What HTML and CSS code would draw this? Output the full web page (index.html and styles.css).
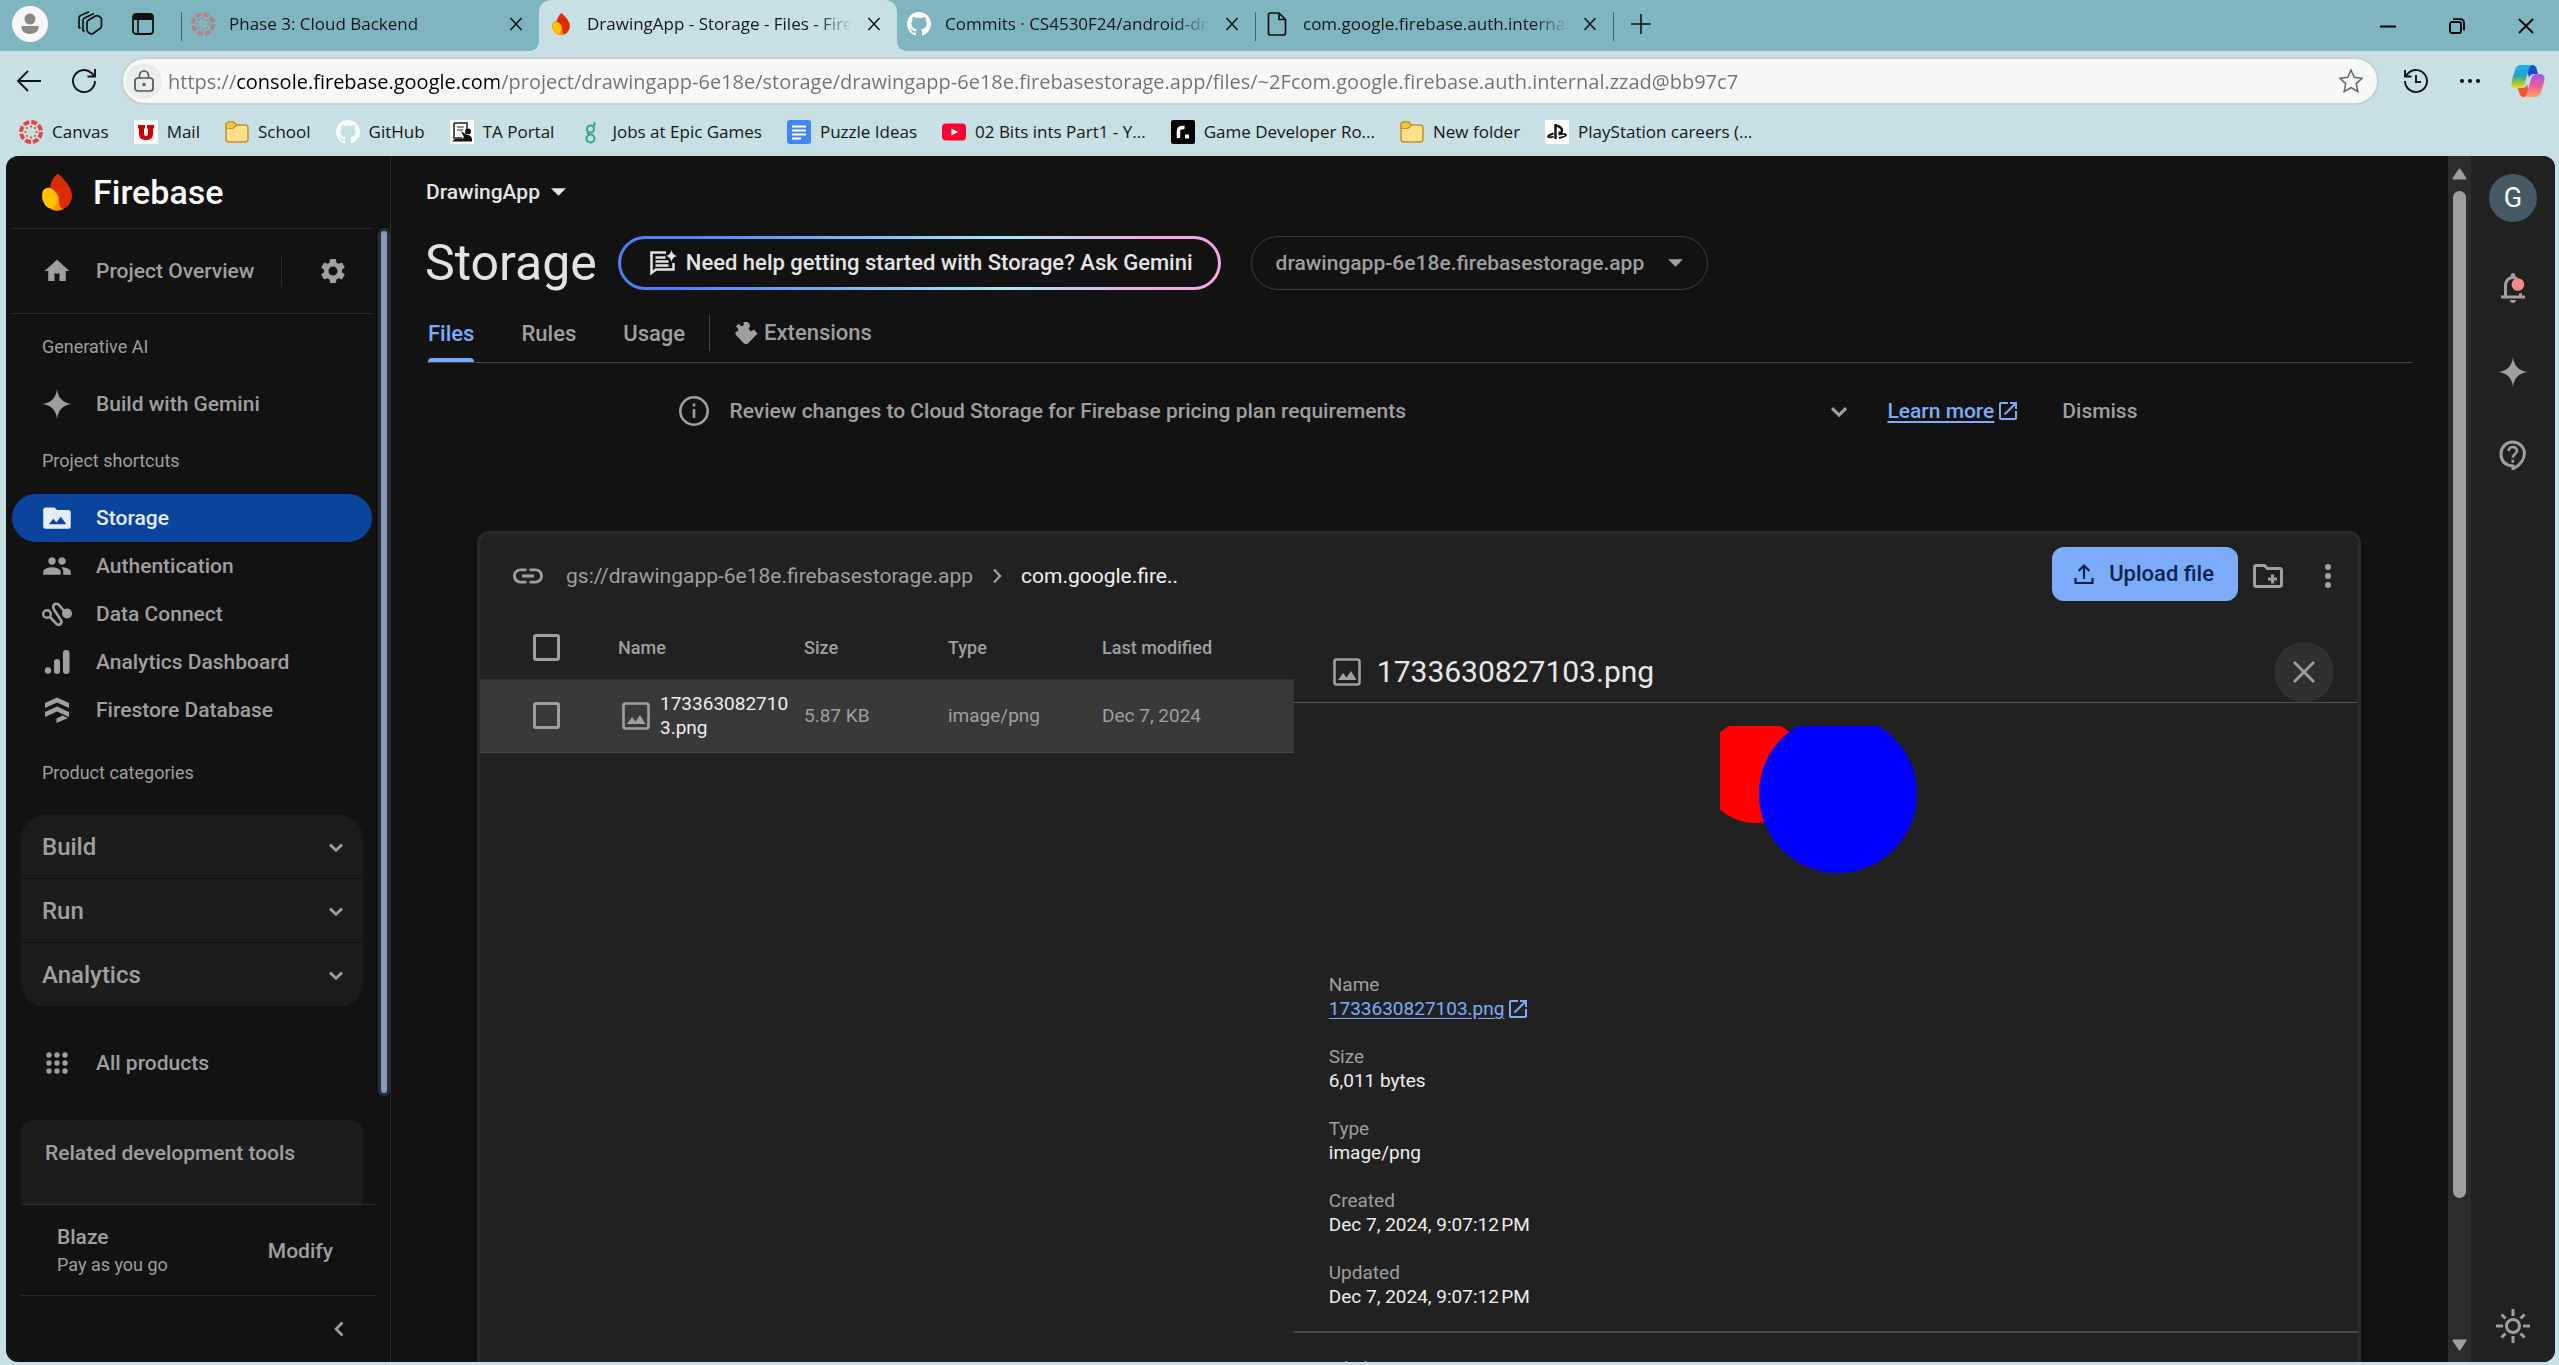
FILE: index.html
```html
<!DOCTYPE html>
<html lang="en">
<head>
<meta charset="utf-8">
<title>DrawingApp - Storage - Files - Firebase console</title>
<link rel="stylesheet" href="styles.css">
</head>
<body>
<svg class="sprite" aria-hidden="true">
  <symbol id="close" viewBox="0 0 24 24"><path d="M6.500 6 17.500 18M17.500 6 6.500 18" fill="none" stroke="currentColor" stroke-width="1.600"/></symbol>
  <symbol id="canvas" viewBox="0 0 24 24"><circle cx="12" cy="12" r="10" fill="none" stroke="currentColor" stroke-width="4" stroke-dasharray="5.850 2"/><g fill="currentColor"><circle cx="12" cy="6.500" r="1.100"/><circle cx="12" cy="17.500" r="1.100"/><circle cx="6.500" cy="12" r="1.100"/><circle cx="17.500" cy="12" r="1.100"/><circle cx="8" cy="8" r="1"/><circle cx="16" cy="8" r="1"/><circle cx="8" cy="16" r="1"/><circle cx="16" cy="16" r="1"/></g></symbol>
  <symbol id="github" viewBox="0 0 16 16"><path fill="#fff" d="M8 0C3.580 0 0 3.580 0 8c0 3.540 2.290 6.530 5.470 7.590.4.070.55-.17.55-.38 0-.19-.01-.82-.01-1.490-2.010.37-2.530-.49-2.690-.94-.09-.23-.48-.94-.82-1.130-.28-.15-.68-.52-.01-.53.63-.01 1.080.58 1.230.82.72 1.210 1.870.87 2.330.66.07-.52.28-.87.51-1.070-1.780-.2-3.640-.89-3.640-3.950 0-.87.31-1.590.82-2.150-.08-.2-.36-1.020.08-2.120 0 0 .67-.21 2.200.82.64-.18 1.320-.27 2-.27s1.360.09 2 .27c1.530-1.040 2.200-.82 2.200-.82.44 1.100.16 1.920.08 2.120.51.56.82 1.270.82 2.150 0 3.070-1.870 3.750-3.650 3.950.29.25.54.73.54 1.480 0 1.070-.01 1.930-.01 2.200 0 .21.15.46.55.38A8.010 8.010 0 0 0 16 8c0-4.420-3.580-8-8-8z"/></symbol>
  <symbol id="folder" viewBox="0 0 24 24"><path d="M1 5q0-3 3-3h4.500l3 3H20q3 0 3 3v11q0 3-3 3H4q-3 0-3-3z" fill="#ffe08a" stroke="#c0922c" stroke-width="1.500"/><path d="M1.500 8.500H8L11.500 5 8.500 2H4Q1 2 1 5z" fill="#f4c63d" stroke="#c0922c" stroke-width="1.200"/></symbol>
  <symbol id="flame" viewBox="0 0 30 37"><path d="M16 0C22 6 30 14 30 22a15 15 0 0 1-30 0C0 17 3 14 8 14 9 8 11 4 16 0z" fill="#dd2c00"/><path d="M1 17Q5 12.500 10 15.500 17 20 17 27q0 4-2.500 8Q8 37 4 32.500-1.500 26 1 17z" fill="#ffc400"/><path d="M8 14.500Q17 19 17 27t5 8.500Q15 38.500 9 36 15 32 15.500 26 15 19 8 14.500z" fill="#ff9100"/></symbol>
  <symbol id="chev-down" viewBox="0 0 24 24"><path d="M6 9.500 12 15.500 18 9.500" fill="none" stroke="currentColor" stroke-width="2.600"/></symbol>
  <symbol id="chev-left" viewBox="0 0 24 24"><path d="M15.500 5.500 9 12 15.500 18.500" fill="none" stroke="currentColor" stroke-width="2.600"/></symbol>
  <symbol id="chev-right" viewBox="0 0 24 24"><path d="M9 5.500 15 12 9 18.500" fill="none" stroke="currentColor" stroke-width="2.400"/></symbol>
  <symbol id="caret" viewBox="0 0 16 8"><path d="M0 0h16l-8 8z" fill="currentColor"/></symbol>
  <symbol id="spark" viewBox="0 0 30 30"><path d="M15 0C16 9 21 14 30 15 21 16 16 21 15 30 14 21 9 16 0 15 9 14 14 9 15 0z" fill="currentColor"/></symbol>
  <symbol id="open" viewBox="0 0 24 24"><path fill="currentColor" d="M19 19H5V5h7V3H5a2 2 0 0 0-2 2v14a2 2 0 0 0 2 2h14c1.100 0 2-.9 2-2v-7h-2v7zM14 3v2h3.590l-9.830 9.830 1.410 1.410L19 6.410V10h2V3h-7z"/></symbol>
  <symbol id="image" viewBox="0 0 28 28"><path fill="none" stroke="currentColor" stroke-width="2.600" d="M3.500 1.500h21q2 0 2 2v21q0 2-2 2h-21q-2 0-2-2v-21q0-2 2-2z"/><path fill="currentColor" d="M5 22l5-7 3.500 4.500L18 13l5.500 9z"/></symbol>
</svg>

<header class="browser">
  <div class="tabstrip">
    <div class="tools">
      <button class="plain" aria-label="Profile"><svg width="36" height="36" viewBox="0 0 36 36"><circle cx="18" cy="18" r="18" fill="#f7f7f7"/><circle cx="18" cy="13" r="5.500" fill="#8a8886"/><path d="M9.500 20h17q1 7-8.500 8-9.500-1-8.500-8z" fill="#8a8886"/></svg></button>
      <button class="plain" aria-label="Workspaces"><svg width="26" height="26" viewBox="0 0 26 26" fill="none" stroke="#111" stroke-width="1.700"><path d="M10 11.500q0-1.500 1.500-2.500l7-4q1.500-.8 3 0l1.500 1q1.500 1 1.500 2.500v6.500q0 1.500-1.500 2.500l-7 5q-1.500 1-3 0l-1.500-1q-1.500-1-1.500-2.500z"/><path d="M7.500 20.500 6 19.500V9.500q0-1.500 1.500-2.500L17 2.500M3.500 17.500 2 16.500V7q0-1.500 1.500-2.500L12 .8"/></svg></button>
      <button class="plain" aria-label="Tab actions"><svg width="24" height="24" viewBox="0 0 24 24"><rect x="2" y="2" width="20" height="20" rx="3" fill="none" stroke="#111" stroke-width="1.800"/><path d="M2 3h20v5H2z" fill="#111"/><path d="M7 8v14" stroke="#111" stroke-width="1.600"/></svg></button>
    </div>
    <div class="tab ruled"><svg class="fav faded" width="24" height="24"><use href="#canvas"/></svg><span class="tab-title">Phase 3: Cloud Backend</span><button class="plain" aria-label="Close tab"><svg width="24" height="24"><use href="#close"/></svg></button></div>
    <div class="tab active"><svg class="fav" width="20" height="22"><use href="#flame"/></svg><span class="tab-title">DrawingApp - Storage - Files - Firebase console</span><button class="plain" aria-label="Close tab"><svg width="24" height="24"><use href="#close"/></svg></button></div>
    <div class="tab"><svg class="fav" width="24" height="24"><use href="#github"/></svg><span class="tab-title">Commits · CS4530F24/android-drawing-app</span><button class="plain" aria-label="Close tab"><svg width="24" height="24"><use href="#close"/></svg></button></div>
    <div class="tab ruled"><svg class="fav" width="24" height="24" viewBox="0 0 24 24"><path d="M3.500 3q0-2 2-2H14l6.500 6.500V21q0 2-2 2h-13q-2 0-2-2zM14 1v6.500h6.500" fill="none" stroke="#111" stroke-width="1.700"/></svg><span class="tab-title">com.google.firebase.auth.internal.zzad</span><button class="plain" aria-label="Close tab"><svg width="24" height="24"><use href="#close"/></svg></button></div>
    <div class="newtab"><button class="plain" aria-label="New tab"><svg width="22" height="22" viewBox="0 0 22 22"><path d="M11 1v20M1 11h20" stroke="#111" stroke-width="1.600"/></svg></button></div>
    <div class="winctl">
      <button class="plain" aria-label="Minimize"><svg width="16" height="16" viewBox="0 0 16 16"><path d="M0 8.500h16" stroke="#000" stroke-width="2"/></svg></button>
      <button class="plain" aria-label="Restore"><svg width="16" height="16" viewBox="0 0 16 16" fill="none" stroke="#000" stroke-width="1.800"><rect x="1" y="4" width="11" height="11" rx="2"/><path d="M4 1.200h7q4 0 4 4v7"/></svg></button>
      <button class="plain" aria-label="Close"><svg width="16" height="16" viewBox="0 0 16 16"><path d="M1 1l14 14M15 1 1 15" stroke="#000" stroke-width="1.800"/></svg></button>
    </div>
  </div>

  <div class="toolbar">
    <button class="plain" aria-label="Back"><svg width="26" height="26" viewBox="0 0 26 26" fill="none" stroke="#111" stroke-width="1.900"><path d="M25 13H2M12 3 2 13l10 10"/></svg></button>
    <button class="plain reload" aria-label="Refresh"><svg width="26" height="26" viewBox="0 0 26 26" fill="none" stroke="#111" stroke-width="1.900"><path d="M24 13A11 11 0 1 1 20.500 5L23.500 8M24 1v7.500h-7.500"/></svg></button>
    <div class="address">
      <span class="lock"><svg width="20" height="22" viewBox="0 0 20 22" fill="none" stroke="#555" stroke-width="1.700"><rect x="1" y="8" width="18" height="13" rx="3"/><path d="M5.500 8V5.500a4.500 4.500 0 0 1 9 0V8"/><circle cx="10" cy="14.500" r=".8" fill="#555"/></svg></span>
      <input type="text" aria-label="Address" value="https://console.firebase.google.com/project/drawingapp-6e18e/storage/drawingapp-6e18e.firebasestorage.app/files/~2Fcom.google.firebase.auth.internal.zzad@bb97c7">
      <button class="plain" aria-label="Add to favorites"><svg width="26" height="26" viewBox="0 0 26 26"><path d="m13 2 3.300 7.200 7.700 1-5.700 5.400 1.500 7.900L13 19.600l-6.800 3.900 1.500-7.900L2 10.200l7.700-1z" fill="none" stroke="#666" stroke-width="1.500"/></svg></button>
    </div>
    <div class="toolbar-end">
      <button class="plain" aria-label="History"><svg width="26" height="26" viewBox="0 0 26 26" fill="none" stroke="#111" stroke-width="1.900"><path d="M2 13A11 11 0 1 0 5 5.500L2.500 8M2 2v6.500h6.500M13 7v7h5"/></svg></button>
      <button class="plain" aria-label="Settings and more"><svg width="22" height="6" viewBox="0 0 22 6"><circle cx="3" cy="3" r="2"/><circle cx="11" cy="3" r="2"/><circle cx="19" cy="3" r="2"/></svg></button>
      <button class="plain" aria-label="Copilot"><svg width="34" height="32" viewBox="0 0 34 32">
        <defs><linearGradient id="cp1" x1="0" y1="0" x2="0" y2="1"><stop offset="0" stop-color="#18b4f0"/><stop offset=".45" stop-color="#2a9fc9"/><stop offset=".75" stop-color="#8fc43c"/><stop offset="1" stop-color="#ffd21a"/></linearGradient><linearGradient id="cp2" x1="0" y1="0" x2="0" y2="1"><stop offset="0" stop-color="#9a5cf5"/><stop offset=".5" stop-color="#ee5a9c"/><stop offset="1" stop-color="#ffa45c"/></linearGradient></defs>
        <path d="M15 0h6q4 0 5 5l1 4h-4q-4 0-5 4z" fill="#1b4fd0"/><path d="M19 32h-6q-4 0-5-5l-1-4h4q4 0 5-4z" fill="#f0543c"/>
        <path d="M10 0h12q-3 0-4 4l-4 14q-1.500 5-6 5H5q-6 0-4-8L4 5q1.500-5 6-5z" fill="url(#cp1)"/><path d="M24 32H12q3 0 4-4l4-14q1.500-5 6-5h3q6 0 4 8l-3 10q-1.500 5-6 5z" fill="url(#cp2)"/></svg></button>
    </div>
  </div>

  <nav class="bookmarks" aria-label="Favorites">
    <a href="#"><svg class="red" width="24" height="24"><use href="#canvas"/></svg>Canvas</a>
    <a href="#"><svg width="24" height="24" viewBox="0 0 24 24"><path d="M0 0h24v24H0z" fill="#fff"/><path d="M4 5h7v3.500h-1V14q0 2 2 2t2-2V8.500h-1V5h7v3.500h-1V14q0 6-7 6t-7-6V8.500H4z" fill="#c00"/></svg>Mail</a>
    <a href="#"><svg width="24" height="24"><use href="#folder"/></svg>School</a>
    <a href="#"><svg width="24" height="24"><use href="#github"/></svg>GitHub</a>
    <a href="#"><svg width="24" height="24" viewBox="0 0 24 24"><path d="M0 0h24v24H0z" fill="#fff"/><path d="M4 3h13v8M4 3v15h8" fill="none" stroke="#555" stroke-width="2"/><path d="M7 7h7M7 10h6" stroke="#999" stroke-width="2"/><circle cx="18" cy="11.500" r="3" fill="#111"/><path d="M2 21.500h20V20q0-5-5-5l-6-4 3 6-2 2H5z" fill="#111"/></svg>TA Portal</a>
    <a href="#"><svg width="24" height="24" viewBox="0 0 24 24" fill="none" stroke="#33a984" stroke-width="2"><circle cx="11.500" cy="9" r="3.500"/><circle cx="11.500" cy="18.500" r="4"/><path d="M14 6.500Q16 5 15.500 2M9 11.500q-1.500 2.500 2 3"/></svg>Jobs at Epic Games</a>
    <a href="#"><svg width="24" height="24" viewBox="0 0 24 24"><rect width="24" height="24" rx="3" fill="#4285f4"/><path d="M5 6.500h14M5 10.500h14M5 14.500h14M5 18.500h9" stroke="#fff" stroke-width="2"/></svg>Puzzle Ideas</a>
    <a href="#"><svg width="24" height="24" viewBox="0 0 24 24"><rect y="3.500" width="24" height="17" rx="4" fill="#f03"/><path d="m9.500 8.500 6.500 3.500-6.500 3.500z" fill="#fff"/></svg>02 Bits ints Part1 - Y...</a>
    <a href="#"><svg width="24" height="24" viewBox="0 0 24 24"><rect width="24" height="24" rx="2" fill="#000"/><path d="M7.500 18V11q0-4 6-3.500" fill="none" stroke="#fff" stroke-width="3.500"/><path d="M14 14.500h4v4h-4z" fill="#fff"/></svg>Game Developer Ro...</a>
    <a href="#"><svg width="24" height="24"><use href="#folder"/></svg>New folder</a>
    <a href="#"><svg width="24" height="24" viewBox="0 0 24 24"><path d="M0 0h24v24H0z" fill="#fff"/><path d="M10.500 4v15M10.500 5.500q6.500 1 6.500 5 0 3-3.500 2" fill="none" stroke="#111" stroke-width="2.400"/><path d="M8.500 13.500q-6.500 2-5 3.500 2 1 5-.5M13.500 14.500q7-1.500 7.500.5 0 1.500-7 3" fill="none" stroke="#111" stroke-width="1.900"/></svg>PlayStation careers (...</a>
  </nav>
</header>

<div class="page">
  <aside class="sidebar">
    <a class="brand" href="#"><svg width="30" height="38"><use href="#flame"/></svg><span>Firebase</span></a>
    <div class="nav-scroll">
      <div class="overview">
        <a class="nav-item" href="#"><svg width="30" height="30" viewBox="0 0 24 24"><path fill="currentColor" d="M10 20v-6h4v6h5v-8h3L12 3 2 12h3v8z"/></svg>Project Overview</a>
        <button class="plain gear" aria-label="Project settings"><svg width="30" height="30" viewBox="0 0 24 24"><path fill="currentColor" d="M19.140 12.940c.04-.3.060-.61.060-.94 0-.32-.02-.64-.07-.94l2.030-1.580c.18-.14.23-.41.12-.61l-1.920-3.320c-.12-.22-.37-.29-.59-.22l-2.390.96c-.5-.38-1.030-.7-1.620-.94l-.36-2.540c-.04-.24-.24-.41-.48-.41h-3.840c-.24 0-.43.17-.47.41l-.36 2.540c-.59.24-1.130.57-1.620.94l-2.390-.96c-.22-.08-.47 0-.59.22L2.740 8.870c-.12.21-.08.47.12.61l2.030 1.580c-.05.3-.09.63-.09.94s.02.64.07.94l-2.030 1.580c-.18.14-.23.41-.12.61l1.920 3.320c.12.22.37.29.59.22l2.390-.96c.5.38 1.030.7 1.620.94l.36 2.540c.05.24.24.41.48.41h3.840c.24 0 .44-.17.47-.41l.36-2.540c.59-.24 1.130-.56 1.620-.94l2.390.96c.22.08.47 0 .59-.22l1.920-3.320c.12-.22.07-.47-.12-.61l-2.010-1.580zM12 15.600A3.600 3.600 0 1 1 12 8.400a3.600 3.600 0 0 1 0 7.200z"/></svg></button>
      </div>
      <h2 class="nav-label">Generative AI</h2>
      <a class="nav-item" href="#"><svg width="30" height="30"><use href="#spark"/></svg>Build with Gemini</a>
      <h2 class="nav-label">Project shortcuts</h2>
      <nav>
        <a class="nav-item current" href="#"><svg width="30" height="30" viewBox="0 0 24 24"><path fill="currentColor" fill-rule="evenodd" d="M20 5.500h-8l-2-2H3Q1 3.500 1 5.500v13q0 2 2 2h18q2 0 2-2V7.500q0-2-2-2zM5.500 17 9 12.500l2.500 3 3.500-4.500 4.500 6z"/></svg>Storage</a>
        <a class="nav-item" href="#"><svg width="30" height="30" viewBox="0 0 24 24"><path fill="currentColor" d="M16 11c1.660 0 2.990-1.340 2.990-3S17.660 5 16 5s-3 1.340-3 3 1.340 3 3 3zm-8 0c1.660 0 2.990-1.340 2.990-3S9.660 5 8 5 5 6.340 5 8s1.340 3 3 3zm0 2c-2.330 0-7 1.170-7 3.500V19h14v-2.500C15 14.170 10.330 13 8 13zm8 0c-.29 0-.62.020-.97.050 1.160.84 1.970 1.970 1.970 3.450V19h6v-2.500c0-2.330-4.670-3.500-7-3.500z"/></svg>Authentication</a>
        <a class="nav-item" href="#"><svg width="30" height="30" viewBox="0 0 30 30"><circle cx="5" cy="15" r="3.800" fill="none" stroke="currentColor" stroke-width="2.400"/><circle cx="25" cy="14.500" r="5" fill="currentColor"/><path d="M8 18l6 6.500q2.500 2.500 4.500.5 2-2 0-4.500l-6.500-10q-2-4 1-5.500 2.500-1 4.500 1.500l5 6" fill="none" stroke="currentColor" stroke-width="2.600"/></svg>Data Connect</a>
        <a class="nav-item" href="#"><svg width="30" height="30" viewBox="0 0 30 30" fill="currentColor"><circle cx="6" cy="23.500" r="3.200"/><rect x="12" y="12" width="6" height="15" rx="3"/><rect x="21" y="3" width="6.500" height="24" rx="3"/></svg>Analytics Dashboard</a>
        <a class="nav-item" href="#"><svg width="30" height="30" viewBox="0 0 30 30" fill="currentColor"><path d="M3 8 15 2.500 27 8v5L15 7.500 3 13zM3 17l12-5.500L27 17v5l-12-5.500L3 22zM14.500 23.500l6-3 5.500 2.500-11.500 5z"/></svg>Firestore Database</a>
      </nav>
      <h2 class="nav-label spaced">Product categories</h2>
      <div class="categories">
        <button>Build<svg width="24" height="24"><use href="#chev-down"/></svg></button>
        <button>Run<svg width="24" height="24"><use href="#chev-down"/></svg></button>
        <button>Analytics<svg width="24" height="24"><use href="#chev-down"/></svg></button>
      </div>
      <a class="nav-item all" href="#"><svg width="30" height="30" viewBox="0 0 30 30" fill="currentColor"><circle cx="7" cy="7" r="2.700"/><circle cx="15" cy="7" r="2.700"/><circle cx="23" cy="7" r="2.700"/><circle cx="7" cy="15" r="2.700"/><circle cx="15" cy="15" r="2.700"/><circle cx="23" cy="15" r="2.700"/><circle cx="7" cy="23" r="2.700"/><circle cx="15" cy="23" r="2.700"/><circle cx="23" cy="23" r="2.700"/></svg>All products</a>
      <section class="related">Related development tools</section>
    </div>
    <div class="plan">
      <div><strong>Blaze</strong><span>Pay as you go</span></div>
      <a href="#">Modify</a>
    </div>
    <div class="collapse"><button class="plain" aria-label="Collapse navigation"><svg width="24" height="24"><use href="#chev-left"/></svg></button></div>
    <div class="side-thumb"></div>
  </aside>

  <main class="content">
    <button class="plain project">DrawingApp<svg width="15" height="8"><use href="#caret"/></svg></button>
    <div class="title-row">
      <h1>Storage</h1>
      <button class="ask"><svg width="28" height="28" viewBox="0 0 28 28" fill="none" stroke="currentColor" stroke-width="2.500"><path d="M17 3.500H2.500V24L7 20.500h17.500V14M6.500 8.500h10M6.500 12.500h13M6.500 16.500h13"/><path fill="currentColor" stroke="none" d="M22.500 1q.8 5 5.500 6-4.700 1-5.500 6-.8-5-5.500-6 4.700-1 5.500-6z"/></svg>Need help getting started with Storage? Ask Gemini</button>
      <div class="bucket"><select aria-label="Bucket"><option>drawingapp-6e18e.firebasestorage.app</option></select><svg width="15" height="8"><use href="#caret"/></svg></div>
    </div>
    <nav class="sections">
      <a class="on" href="#">Files</a><a href="#">Rules</a><a href="#">Usage</a>
      <a class="ext" href="#"><svg width="24" height="24" viewBox="0 0 24 24"><path fill="currentColor" d="M2 5.500 5 2.500q1 3 3.500 2.500Q10.500 4 9.500 1h4l2 2q1 3-1 4.500l2 3 3.500-2 3.500 4L14 22.500q-2 1.500-4 0l-8-8.500q-1.500-2 0-3.500 2 .5 2.500-1.500Q4 7 2 5.500z"/></svg>Extensions</a>
    </nav>
    <div class="notice">
      <svg width="32" height="32" viewBox="0 0 32 32" fill="none" stroke="currentColor" stroke-width="2.600"><circle cx="16" cy="16" r="13.700"/><path d="M16 14v9M16 8.500v3"/></svg>
      <p>Review changes to Cloud Storage for Firebase pricing plan requirements</p>
      <button class="plain" aria-label="Expand"><svg width="28" height="28"><use href="#chev-down"/></svg></button>
      <a class="link" href="#"><span>Learn more</span><svg width="24" height="24"><use href="#open"/></svg></a>
      <button class="plain dismiss">Dismiss</button>
    </div>

    <section class="card">
      <div class="card-bar">
        <svg width="36" height="36" viewBox="0 0 24 24"><path fill="currentColor" d="M3.900 12c0-1.710 1.390-3.100 3.100-3.100h4V7H7c-2.760 0-5 2.240-5 5s2.240 5 5 5h4v-1.900H7c-1.710 0-3.100-1.390-3.100-3.100zM8 13h8v-2H8v2zm9-6h-4v1.900h4c1.710 0 3.100 1.390 3.100 3.100s-1.390 3.100-3.100 3.100h-4V17h4c2.760 0 5-2.240 5-5s-2.240-5-5-5z"/></svg>
        <a class="crumb" href="#">gs://drawingapp-6e18e.firebasestorage.app</a>
        <svg class="sep" width="24" height="24"><use href="#chev-right"/></svg>
        <span class="crumb here">com.google.fire..</span>
        <button class="upload"><svg width="24" height="24" viewBox="0 0 24 24" fill="none" stroke="currentColor" stroke-width="2.200"><path d="M12 17V4M6.500 9 12 3.500 17.500 9M3.500 16v5h17v-5"/></svg>Upload file</button>
        <button class="plain folder" aria-label="Create folder"><svg width="36" height="36" viewBox="0 0 24 24"><path fill="currentColor" d="M20 6h-8l-2-2H4c-1.100 0-2 .9-2 2v12c0 1.100.9 2 2 2h16c1.100 0 2-.9 2-2V8c0-1.100-.9-2-2-2zm0 12H4V6h5.170l2 2H20v10zm-6-1h2v-2h2v-2h-2v-2h-2v2h-2v2h2z"/></svg></button>
        <button class="plain more" aria-label="More actions"><svg width="8" height="26" viewBox="0 0 8 26" fill="currentColor"><circle cx="4" cy="4" r="3"/><circle cx="4" cy="13" r="3"/><circle cx="4" cy="22" r="3"/></svg></button>
      </div>
      <div class="split">
        <div>
          <table class="files">
            <thead><tr><th class="pick"><input type="checkbox" aria-label="Select all"></th><th class="name">Name</th><th class="size">Size</th><th class="type">Type</th><th>Last modified</th></tr></thead>
            <tbody><tr><td class="pick"><input type="checkbox" aria-label="Select 1733630827103.png"></td><td class="name"><div><svg width="28" height="28"><use href="#image"/></svg><a href="#">1733630827103.png</a></div></td><td>5.87 KB</td><td>image/png</td><td>Dec 7, 2024</td></tr></tbody>
          </table>
        </div>
        <div class="details">
          <div class="details-head"><svg width="28" height="28"><use href="#image"/></svg><h2>1733630827103.png</h2><button aria-label="Close details"><svg width="28" height="28" viewBox="0 0 28 28"><path d="M4 4l20 20M24 4 4 24" stroke="currentColor" stroke-width="2.600"/></svg></button></div>
          <svg class="preview" width="211" height="224" viewBox="0 0 211 224"><circle cx="35" cy="45" r="52" fill="#f00"/><circle cx="118" cy="68" r="79" fill="#00f"/></svg>
          <dl>
            <div><dt>Name</dt><dd><a class="link" href="#"><span>1733630827103.png</span><svg width="24" height="24"><use href="#open"/></svg></a></dd></div>
            <div><dt>Size</dt><dd>6,011 bytes</dd></div>
            <div><dt>Type</dt><dd>image/png</dd></div>
            <div><dt>Created</dt><dd>Dec 7, 2024, 9:07:12&#8239;PM</dd></div>
            <div><dt>Updated</dt><dd>Dec 7, 2024, 9:07:12&#8239;PM</dd></div>
          </dl>
          <div class="location">File location</div>
        </div>
      </div>
    </section>
  </main>

  <div class="scrollbar"><svg width="15" height="12" viewBox="0 0 15 12"><path d="M7.500 1.500 13.500 10.500h-12z" fill="#9f9f9f" stroke="#9f9f9f" stroke-width="2" stroke-linejoin="round"/></svg><div class="track"><div class="thumb"></div></div><svg width="15" height="12" viewBox="0 0 15 12"><path d="M1.500 1.500h12l-6 9z" fill="#9f9f9f" stroke="#9f9f9f" stroke-width="2" stroke-linejoin="round"/></svg></div>

  <aside class="rail">
    <button class="avatar" aria-label="Account">G</button>
    <button class="plain" aria-label="Notifications"><svg width="36" height="36" viewBox="0 0 24 24"><path fill="currentColor" d="M4 19v-2h2v-7q0-2.075 1.250-3.690Q8.500 4.710 10.500 4.200v-.7q0-.625.440-1.060Q11.380 2 12 2t1.060.44q.44.440.44 1.060v.7q2 .51 3.250 2.110Q18 7.930 18 10v7h2v2zm8 3q-.825 0-1.410-.59Q10 20.830 10 20h4q0 .825-.59 1.410Q12.830 22 12 22zm-4-5h8v-7q0-1.650-1.170-2.830Q13.650 6 12 6T9.180 7.170Q8 8.350 8 10z"/><path d="M15 4h5v11.500h-5z" fill="#212121"/><circle cx="15.300" cy="9.700" r="4.200" fill="#f28b88"/></svg></button>
    <button class="plain" aria-label="Gemini"><svg width="30" height="30"><use href="#spark"/></svg></button>
    <button class="plain" aria-label="Help"><svg width="30" height="32" viewBox="0 0 30 32" fill="none" stroke="currentColor"><path d="M15 30v-4q-12-1-12-12A11.500 11.500 0 0 1 26.500 13.500Q26 23 15 29" stroke-width="3"/><path d="M10.500 11q.5-4 4.300-4t4.200 3.700q0 1.800-2.200 3.500-2 1.500-2 3.500M14.800 19.700v3" stroke-width="2.600"/></svg></button>
    <button class="plain theme" aria-label="Theme"><svg width="34" height="34" viewBox="0 0 34 34" fill="none" stroke="currentColor" stroke-width="3"><circle cx="17" cy="17" r="6.500"/><path d="M17 0v7M17 27v7M0 17h7M27 17h7M5.500 5.500l4 4M24.500 24.500l4 4M28.500 5.500l-4 4M9.500 24.500l-4 4"/></svg></button>
  </aside>
</div>
</body>
</html>
```
FILE: styles.css
```css
* { box-sizing: border-box; }
body {
  margin: 0;
  height: 100vh;
  overflow: hidden;
  display: flex;
  flex-direction: column;
  background: #c8dfe3;
  color: #9f9f9f;
  font: 400 19px/24px Roboto, sans-serif;
}
a { color: inherit; text-decoration: none; }
svg { flex: none; display: block; }
h1, h2, p, dl, dd { margin: 0; }
button, select, input { font: inherit; color: inherit; }
.sprite { position: absolute; width: 0; height: 0; }
.plain { border: 0; padding: 0; background: none; display: flex; align-items: center; justify-content: center; flex: none; }

/* Browser chrome */
.browser { flex: none; font: 400 17px/24px "Open Sans", sans-serif; color: #161616; }
.tabstrip { display: flex; height: 51px; background: #7eb5bf; }
.tools { display: flex; align-items: center; width: 181px; padding: 0 26px 3px 12px; justify-content: space-between; }
.tab { position: relative; display: flex; align-items: center; gap: 14px; flex: 0 1 358px; min-width: 0; padding: 0 11px 3px 10px; }
.ruled::before, .newtab::before { content: ""; position: absolute; left: 0; top: 12px; width: 1px; height: 29px; background: #41636a; }
.tab-title { flex: 1; overflow: hidden; white-space: nowrap; -webkit-mask-image: linear-gradient(to left, transparent 4px, #000 40px); mask-image: linear-gradient(to left, transparent 4px, #000 40px); }
.tab .plain { margin-left: -8px; }
.tab .fav { width: 24px; }
.faded { color: #b58488; }
.active { background: #c8dfe3; border-radius: 12px 12px 0 0; z-index: 1; }
.active::before, .active::after { content: ""; position: absolute; bottom: 0; width: 10px; height: 10px; }
.active::before { left: -10px; background: radial-gradient(circle at 0 0, transparent 10px, #c8dfe3 10px); }
.active::after { right: -10px; background: radial-gradient(circle at 100% 0, transparent 10px, #c8dfe3 10px); }
.newtab { position: relative; display: flex; align-items: center; padding: 0 17px 4px; }
.winctl { margin-left: auto; display: flex; align-items: center; gap: 53px; padding-right: 25px; }
.toolbar { display: flex; align-items: center; padding: 6px 14px 0 16px; }
.reload { margin: 0 24px 0 29px; }
.address { flex: 1; display: flex; align-items: center; height: 48px; padding: 0 13px 0 3px; border: 2px solid #cbcfd0; border-radius: 24px; background: #f5f9fa; }
.lock { display: flex; align-items: center; justify-content: center; width: 36px; height: 36px; border-radius: 18px; background: #e9edee; }
.address input {
  flex: 1;
  min-width: 0;
  border: 0;
  outline: 0;
  padding: 2px 0 0 6px;
  font-size: 20px;
  line-height: 30px;
  color: transparent;
  background: linear-gradient(90deg, #707273 74px, #000 74px, #000 337px, #707273 337px);
  -webkit-background-clip: text;
  background-clip: text;
}
.toolbar-end { display: flex; align-items: center; gap: 30px; margin-left: 24px; }
.bookmarks { display: flex; align-items: center; gap: 25px; height: 51px; padding: 3px 19px 0; white-space: nowrap; overflow: hidden; }
.bookmarks a { display: flex; align-items: center; gap: 9px; }
.red { color: #e0483e; }

/* Page frame */
.page { flex: 1; min-height: 0; display: flex; margin: 0 4px 3px 6px; border-radius: 12px; overflow: hidden; background: #121212; }

/* Sidebar */
.sidebar { position: relative; flex: none; width: 385px; display: flex; flex-direction: column; border-right: 1px solid #2b2b2b; font-size: 21px; font-weight: 500; }
.brand { display: flex; align-items: center; gap: 21px; height: 73px; flex: none; margin: 0 18px 0 6px; padding: 0 30px; border-bottom: 1px solid #282828; color: #fff; font: 500 34px/40px Roboto, sans-serif; }
.nav-scroll { flex: 1; min-height: 0; overflow: hidden; padding: 0 18px 0 6px; }
.overview { display: flex; align-items: center; height: 85px; border-bottom: 1px solid #282828; }
.overview .nav-item { flex: 1; padding-right: 0; }
.nav-item { display: flex; align-items: center; gap: 24px; height: 48px; padding: 0 30px; border-radius: 24px; white-space: nowrap; }
.gear { width: 91px; height: 30px; padding-left: 12px; border-left: 1px solid #282828; }
.nav-label { margin: 18px 0 18px; padding-left: 30px; font: 400 18px/30px Roboto, sans-serif; }
.nav-label.spaced { margin: 24px 0 27px; }
.current { background: #0b449d; color: #e6edfa; }
.categories { margin: 0 9px; border-radius: 24px; overflow: hidden; }
.categories button { display: flex; align-items: center; justify-content: space-between; width: 100%; height: 64px; padding: 0 15px 0 21px; border: 0; border-bottom: 1px solid #121212; background: #1c1c1c; font-size: 24px; font-weight: 500; }
.all { margin: 32px 0 33px; }
.related { margin: 0 9px; height: 120px; padding: 21px 24px; border-radius: 12px; background: #1c1c1c; }
.plan { display: flex; align-items: center; justify-content: space-between; height: 91px; margin: 0 15px; padding: 2px 42px 0 36px; border-top: 1px solid #282828; }
.plan strong, .plan span { display: block; font-weight: 500; line-height: 27px; }
.plan span { font-size: 18px; font-weight: 400; }
.collapse { display: flex; align-items: center; justify-content: flex-end; height: 67px; margin: 0 15px; padding-right: 24px; border-top: 1px solid #282828; }
.side-thumb { position: absolute; right: 0; top: 72px; bottom: 266px; width: 12px; border: 3px solid #252f3d; border-radius: 6px; background: #8a9ab5; }

/* Content */
.content { flex: 1; min-width: 0; overflow: hidden; padding-top: 16px; font-weight: 500; }
.project { height: 40px; margin-left: 35px; gap: 11px; color: #e4e4e4; font-size: 21px; }
.title-row { display: flex; align-items: center; margin: 23px 35px 0 34px; height: 56px; }
h1 { color: #e3e3e3; font: 400 50px/54px Roboto, sans-serif; margin-right: 21px; }
.ask { display: flex; align-items: center; gap: 9px; height: 54px; padding: 0 25px 0 28px; border: 3px solid transparent; border-radius: 27px; color: #e4e4e4; font-size: 22px; font-weight: 500; background: linear-gradient(#121212, #121212) padding-box, linear-gradient(90deg, #4f80f8 10%, #a8e6f6 64%, #f8a6e4 90%) border-box; }
.bucket { position: relative; display: flex; align-items: center; margin-left: 30px; }
.bucket select { height: 54px; padding: 0 62px 0 24px; border: 1px solid #3c3c3c; border-radius: 27px; background: none; appearance: none; font-size: 21px; font-weight: 500; }
.bucket svg { position: absolute; right: 25px; }
.sections { display: flex; align-items: stretch; height: 58px; margin: 14px 36px 0; border-bottom: 1px solid #42474b; font-size: 22px; }
.sections a { position: relative; display: flex; align-items: center; margin-right: 47px; }
.sections a:nth-child(3) { margin-right: 24px; }
.sections .on { margin-left: 1px; color: #7cacf8; }
.on::after { content: ""; position: absolute; left: 0; right: 0; bottom: 0; height: 4px; border-radius: 4px 4px 0 0; background: #7cacf8; }
.sections .ext { margin: 10px 0 11px; padding-left: 24px; gap: 6px; border-left: 1px solid #42474b; }
.notice { display: flex; align-items: center; height: 60px; max-width: 1484px; margin: 18px auto 0; font-size: 21px; }
.notice p { flex: 1; margin-left: 20px; }
.link { display: inline-flex; align-items: center; gap: 2px; color: #7cacf8; }
.link span { text-decoration: underline; text-underline-offset: 3px; }
.notice .link { margin: 0 42px 0 34px; }
.dismiss { margin-right: 24px; }

/* Files card */
.card { margin: 90px 87px 0 86px; min-height: 900px; border: 3px solid #2a2a2a; border-radius: 12px; background: #212121; font-weight: 400; }
.card-bar { display: flex; align-items: center; height: 83px; padding: 0 22px 0 30px; font-size: 21px; }
.crumb { margin-left: 20px; }
.sep { margin: 0 -8px 0 12px; }
.here { color: #f0f0f0; }
.upload { margin-left: auto; margin-bottom: 4px; display: flex; align-items: center; gap: 13px; height: 54px; padding: 0 24px 0 20px; border: 0; border-radius: 12px; background: #7cacf8; color: #0c2350; font-size: 22px; font-weight: 500; }
.folder { margin-left: 12px; }
.more { width: 16px; margin-left: 34px; }
.split { display: grid; grid-template-columns: 13fr 17fr; }
.files { width: 100%; border-collapse: collapse; table-layout: fixed; }
.files th, .files td { padding: 0; text-align: left; }
.files th { height: 62px; font-size: 18px; font-weight: 500; }
.files tbody tr { height: 73px; background: #393939; border-bottom: 1px solid #484848; border-top: 1px solid #303030; }
.files .pick { width: 138px; padding-left: 53px; }
.files .name { width: 186px; }
.files .size { width: 144px; }
.files .type { width: 154px; }
.files .name div { display: flex; align-items: center; gap: 10px; padding-left: 4px; }
.files .name a { width: 132px; overflow-wrap: anywhere; color: #eee; }
input[type="checkbox"] { appearance: none; display: block; width: 27px; height: 27px; margin: 0; border: 3px solid #9f9f9f; border-radius: 3px; }
.details-head { display: flex; align-items: center; gap: 16px; padding: 25px 24px 0 39px; border-bottom: 1px solid #4d575b; }
.details-head h2 { flex: 1; color: #e8e8e8; font: 400 30px/40px Roboto, sans-serif; }
.details-head button { display: flex; align-items: center; justify-content: center; width: 60px; height: 60px; padding: 0; border: 0; border-radius: 30px; background: #303030; }
.preview { margin: 23px auto 23px; overflow: hidden; }
dl { display: grid; gap: 24px; margin-left: 35px; }
dd { color: #eee; }
.location { margin-top: 22px; padding: 24px 35px; border-top: 2px solid #44474e; }

/* Scrollbar and right rail */
.scrollbar { flex: none; width: 23px; display: flex; flex-direction: column; align-items: center; padding: 12px 0 11px; background: #2c2c2c; }
.track { flex: 1; margin: 11px 0 141px; display: flex; }
.thumb { width: 13px; border-radius: 7px; background: #9f9f9f; }
.rail { flex: none; width: 84px; display: flex; flex-direction: column; align-items: center; padding: 18px 0; background: #212121; }
.rail .plain { height: 48px; margin-top: 36px; }
.avatar { width: 48px; height: 48px; padding: 0; margin-bottom: 6px; border: 0; border-radius: 24px; background: #455a64; color: #fff; font-size: 27px; }
.rail .theme { margin-top: auto; height: 36px; }
```
